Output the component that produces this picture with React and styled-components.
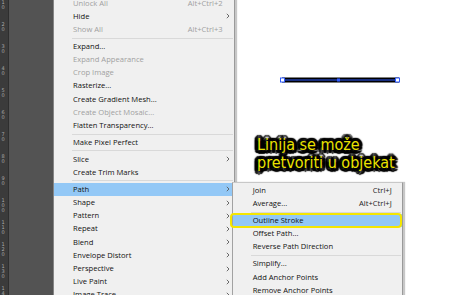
import React from "react";
import styled, { createGlobalStyle } from "styled-components";

const GlobalStyle = createGlobalStyle`
  html, body {
    margin: 0;
    padding: 0;
    background: #fff;
    overflow: hidden;
  }
`;

const mainItems = [
  { label: "Unlock All", shortcut: "Alt+Ctrl+2", disabled: true },
  { label: "Hide", sub: true },
  { label: "Show All", shortcut: "Alt+Ctrl+3", disabled: true },
  "sep",
  { label: "Expand..." },
  { label: "Expand Appearance", disabled: true },
  { label: "Crop Image", disabled: true },
  { label: "Rasterize..." },
  { label: "Create Gradient Mesh..." },
  { label: "Create Object Mosaic...", disabled: true },
  { label: "Flatten Transparency..." },
  "sep",
  { label: "Make Pixel Perfect" },
  "sep",
  { label: "Slice", sub: true },
  { label: "Create Trim Marks" },
  "sep",
  { label: "Path", sub: true, active: true },
  { label: "Shape", sub: true },
  { label: "Pattern", sub: true },
  { label: "Repeat", sub: true },
  { label: "Blend", sub: true },
  { label: "Envelope Distort", sub: true },
  { label: "Perspective", sub: true },
  { label: "Live Paint", sub: true },
  { label: "Image Trace", sub: true },
];

const pathItems = [
  { label: "Join", shortcut: "Ctrl+J" },
  { label: "Average...", shortcut: "Alt+Ctrl+J" },
  "sep",
  { label: "Outline Stroke", active: true, marked: true },
  { label: "Offset Path..." },
  { label: "Reverse Path Direction" },
  "sep",
  { label: "Simplify..." },
  { label: "Add Anchor Points" },
  { label: "Remove Anchor Points" },
  { label: "Divide Objects Below" },
];

const rulerLabels = ["10", "20", "30", "40", "50", "60", "70", "80", "90", "100", "110", "120", "130", "140"];

function Chevron() {
  return (
    <svg width="4" height="6" viewBox="0 0 4 6">
      <polyline points="0.8,0.8 3,3 0.8,5.2" fill="none" stroke="#5a5a5a" strokeWidth="0.9" />
    </svg>
  );
}

function MenuRows({ items }) {
  return items.map((it, i) =>
    it === "sep" ? (
      <Separator key={i} />
    ) : (
      <Item key={i} $active={it.active} $disabled={it.disabled} $marked={it.marked}>
        <span>{it.label}</span>
        <Shortcut $disabled={it.disabled}>{it.shortcut}</Shortcut>
        <Arrow>{it.sub && <Chevron />}</Arrow>
      </Item>
    )
  );
}

function App() {
  return (
    <>
      <GlobalStyle />
      <Screen>
        <Ruler>
          {rulerLabels.map((n) => (
            <RulerLabel key={n}>
              {n.split("").map((d, i) => (
                <span key={i}>{d}</span>
              ))}
            </RulerLabel>
          ))}
        </Ruler>
        <Pasteboard />
        <Menu>
          <MenuList>
            <MenuRows items={mainItems} />
          </MenuList>
        </Menu>
        <Canvas>
          <LineArt width="124" height="10" viewBox="0 0 124 10">
            <rect x="3" y="2.5" width="117" height="5" fill="#000" />
            <line x1="3" y1="5" x2="120" y2="5" stroke="#2e5bff" strokeWidth="1" />
            <rect x="1.5" y="3" width="4" height="4" fill="#fff" stroke="#2e5bff" strokeWidth="1" />
            <rect x="116.5" y="3" width="4" height="4" fill="#fff" stroke="#2e5bff" strokeWidth="1" />
            <rect x="58" y="3.5" width="3" height="3" fill="#2e5bff" />
          </LineArt>
          <Note>
            Linija se može
            <br />
            pretvoriti u objekat
          </Note>
        </Canvas>
        <SubMenu>
          <MenuRows items={pathItems} />
        </SubMenu>
      </Screen>
    </>
  );
}

const Screen = styled.div`
  position: relative;
  display: flex;
  width: 460px;
  height: 295px;
  overflow: hidden;
  font-family: "Open Sans", "Noto Sans", sans-serif;
`;

const Ruler = styled.div`
  width: 9px;
  flex-shrink: 0;
  background: #3b3b3b;
  border-right: 1px solid #2e2e2e;
  box-sizing: border-box;
  display: flex;
  flex-direction: column;
  margin-top: -0.5px;
`;

const RulerLabel = styled.div`
  height: 22px;
  flex-shrink: 0;
  display: flex;
  flex-direction: column;
  padding-left: 1.5px;
  font-family: "DejaVu Sans", sans-serif;
  font-size: 5px;
  line-height: 5.3px;
  color: #a9a9a9;
`;

const Pasteboard = styled.div`
  width: 44px;
  flex-shrink: 0;
  background: #535353;
`;

const Menu = styled.div`
  width: 182px;
  flex-shrink: 0;
  background: #f0f0f0;
  border-left: 1px solid #858585;
  border-right: 1px solid #9a9a9a;
  box-shadow: 2px 0 1px rgba(0, 0, 0, 0.22);
  box-sizing: border-box;
  z-index: 1;
`;

const MenuList = styled.div`
  display: flex;
  flex-direction: column;
  margin-top: -3.4px;
`;

const Item = styled.div`
  position: relative;
  height: 13.2px;
  flex-shrink: 0;
  display: grid;
  grid-template-columns: 1fr auto 11.3px;
  align-items: center;
  padding-left: 19px;
  font-size: 7.6px;
  line-height: 13.2px;
  white-space: nowrap;
  color: ${(p) => (p.$disabled ? "#a0a0a0" : "#111")};
  background: ${(p) => (p.$active ? "#93c8f6" : "transparent")};

  &::after {
    content: "";
    display: ${(p) => (p.$marked ? "block" : "none")};
    position: absolute;
    left: -3px;
    right: 0;
    top: -1px;
    bottom: -1px;
    border: 2.5px solid #f5e600;
    border-radius: 4px;
  }
`;

const Shortcut = styled.span`
  color: ${(p) => (p.$disabled ? "#a0a0a0" : "#222")};
`;

const Arrow = styled.span`
  display: flex;
  justify-content: center;
  align-items: center;
`;

const Separator = styled.div`
  height: 3.7px;
  flex-shrink: 0;
  display: flex;
  align-items: center;
  padding-left: 18px;
  padding-right: 1px;

  &::before {
    content: "";
    flex: 1;
    height: 1px;
    background: #d9d9d9;
  }
`;

const Canvas = styled.div`
  position: relative;
  flex: 1;
  background: #fff;
`;

const LineArt = styled.svg`
  position: absolute;
  left: 44px;
  top: 75px;
`;

const Note = styled.div`
  position: absolute;
  left: 22px;
  top: 136px;
  font-family: "Liberation Sans Narrow", "DejaVu Sans", sans-serif;
  font-stretch: condensed;
  font-size: 16px;
  line-height: 17.5px;
  color: #ebe300;
  white-space: nowrap;
  text-shadow: 3.5px 0 1px #000, -3.5px 0 1px #000, 0 3.5px 1px #000, 0 -3.5px 1px #000,
    2.5px 2.5px 1px #000, -2.5px 2.5px 1px #000, 2.5px -2.5px 1px #000, -2.5px -2.5px 1px #000,
    3.2px 1.5px 1px #000, -3.2px 1.5px 1px #000, 3.2px -1.5px 1px #000, -3.2px -1.5px 1px #000,
    1.5px 3.2px 1px #000, -1.5px 3.2px 1px #000, 1.5px -3.2px 1px #000, -1.5px -3.2px 1px #000,
    0 0 4px #000;
`;

const SubMenu = styled.div`
  position: absolute;
  left: 232px;
  top: 182px;
  width: 171px;
  display: flex;
  flex-direction: column;
  padding-top: 1px;
  background: #f0f0f0;
  border-left: 1px solid #a2a2a2;
  border-top: 1px solid #c8c8c8;
  border-right: 1px solid #9a9a9a;
  box-shadow: 2px 0 1px rgba(0, 0, 0, 0.22);
  box-sizing: border-box;
  z-index: 2;

  ${Item} {
    padding-left: 19.7px;
    grid-template-columns: 1fr auto 10.3px;
  }
`;

export default App;
